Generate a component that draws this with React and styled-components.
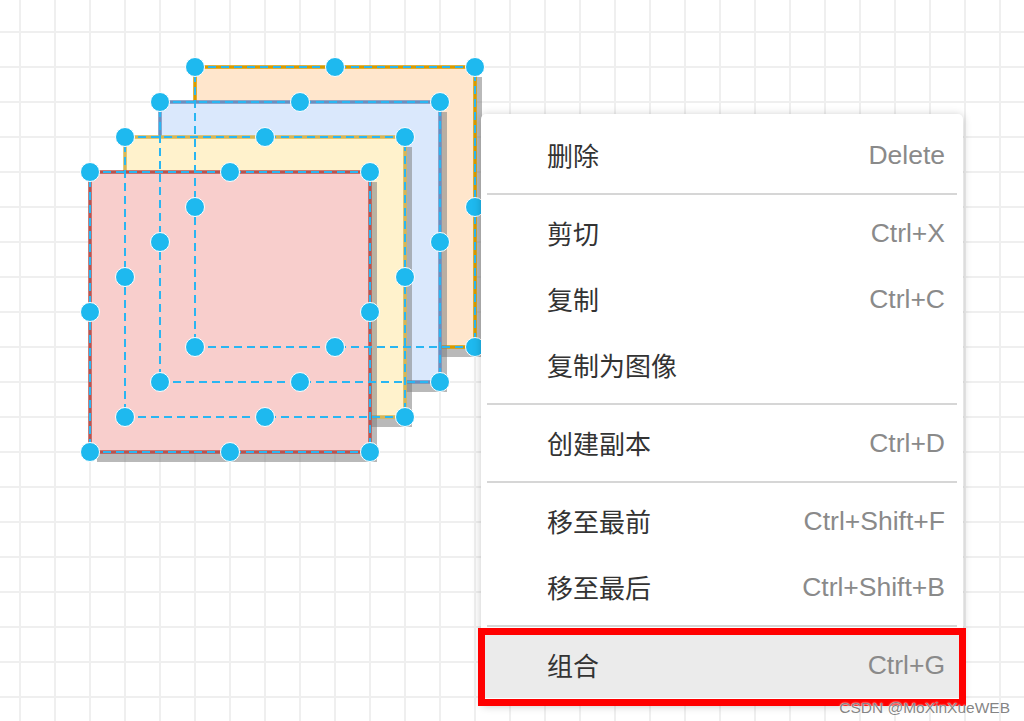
import React from 'react';
import styled, { createGlobalStyle } from 'styled-components';

const GlobalStyle = createGlobalStyle`
  html, body {
    margin: 0;
    padding: 0;
    background: #ffffff;
  }
  body {
    font-family: "Liberation Sans", "Noto Sans CJK SC", sans-serif;
  }
`;

// shapes, back to front
const SIZE = 280;
const shapes = [
  { x: 195, y: 67, fill: '#ffe6cc', stroke: '#d79b00' },
  { x: 160, y: 102, fill: '#dae8fc', stroke: '#6c8ebf' },
  { x: 125, y: 137, fill: '#fff2cc', stroke: '#d6b656' },
  { x: 90, y: 172, fill: '#f8cecc', stroke: '#b85450' },
];

const handlePoints = (s) => {
  const h = SIZE / 2;
  return [
    [s.x, s.y],
    [s.x + h, s.y],
    [s.x + SIZE, s.y],
    [s.x, s.y + h],
    [s.x + SIZE, s.y + h],
    [s.x, s.y + SIZE],
    [s.x + h, s.y + SIZE],
    [s.x + SIZE, s.y + SIZE],
  ];
};

const menu = [
  [{ label: '删除', keys: 'Delete' }],
  [
    { label: '剪切', keys: 'Ctrl+X' },
    { label: '复制', keys: 'Ctrl+C' },
    { label: '复制为图像', keys: '' },
  ],
  [{ label: '创建副本', keys: 'Ctrl+D' }],
  [
    { label: '移至最前', keys: 'Ctrl+Shift+F' },
    { label: '移至最后', keys: 'Ctrl+Shift+B' },
  ],
  [{ label: '组合', keys: 'Ctrl+G', marked: true }],
];

const App = () => {
  return (
    <>
      <GlobalStyle />
      <Canvas>
        <Drawing width="1024" height="721" viewBox="0 0 1024 721">
          {shapes.map((s, i) => (
            <g key={'shape' + i}>
              <rect
                x={s.x + 7}
                y={s.y + 10}
                width={SIZE}
                height={SIZE}
                fill="#808080"
                opacity="0.55"
              />
              <rect
                x={s.x}
                y={s.y}
                width={SIZE}
                height={SIZE}
                fill={s.fill}
                stroke={s.stroke}
                strokeWidth="3.5"
              />
            </g>
          ))}
          {shapes.map((s, i) => (
            <rect
              key={'sel' + i}
              x={s.x}
              y={s.y}
              width={SIZE}
              height={SIZE}
              fill="none"
              stroke="#29b6f2"
              strokeWidth="2"
              strokeDasharray="8 5"
            />
          ))}
          {shapes.map((s, i) =>
            handlePoints(s).map(([cx, cy], j) => (
              <circle
                key={'h' + i + '-' + j}
                cx={cx}
                cy={cy}
                r="9.5"
                fill="#1eb9ef"
                stroke="#ffffff"
                strokeWidth="1"
              />
            ))
          )}
        </Drawing>

        <Menu>
          {menu.map((group, gi) => (
            <React.Fragment key={gi}>
              {gi > 0 && <Divider />}
              {group.map((item) => (
                <MenuItem key={item.label} $marked={item.marked}>
                  <Label>{item.label}</Label>
                  <Keys>{item.keys}</Keys>
                </MenuItem>
              ))}
            </React.Fragment>
          ))}
        </Menu>

        <Watermark>CSDN @MoXinXueWEB</Watermark>
      </Canvas>
    </>
  );
};

export default App;

const Canvas = styled.div`
  position: relative;
  width: 1024px;
  height: 721px;
  overflow: hidden;
  background-color: #ffffff;
  background-image: linear-gradient(to right, #efefef 2px, transparent 2px),
    linear-gradient(to bottom, #efefef 2px, transparent 2px);
  background-size: 35px 35px;
  background-position: 19px -4px;
`;

const Drawing = styled.svg`
  display: block;
`;

const Menu = styled.div`
  position: absolute;
  left: 481px;
  top: 114px;
  width: 482px;
  padding: 8px 0 7px;
  background: #ffffff;
  border-radius: 5px;
  box-shadow: 0 1px 8px rgba(0, 0, 0, 0.22);
`;

const MenuItem = styled.div`
  position: relative;
  display: flex;
  align-items: center;
  justify-content: space-between;
  height: 66px;
  padding: 0 18px 0 66px;
  background: ${(p) => (p.$marked ? '#ebebeb' : 'transparent')};

  ${(p) =>
    p.$marked &&
    `
    &::after {
      content: '';
      position: absolute;
      top: -4px;
      bottom: -8px;
      left: -3px;
      right: -3px;
      border: 7px solid #ff0000;
    }
  `}
`;

const Label = styled.span`
  font-family: "Noto Sans CJK SC", "Noto Sans", sans-serif;
  font-size: 26px;
  color: #333333;
  line-height: 1;
`;

const Keys = styled.span`
  font-family: "Liberation Sans", Arial, sans-serif;
  font-size: 26.5px;
  color: #8a8a8a;
  line-height: 1;
`;

const Divider = styled.div`
  height: 2px;
  margin: 5px 6px;
  background: #d6d6d6;
`;

const Watermark = styled.div`
  position: absolute;
  right: 14px;
  bottom: 6px;
  z-index: 2;
  font-family: "Liberation Sans", Arial, sans-serif;
  font-size: 15.5px;
  line-height: 1;
  color: rgba(110, 110, 110, 0.85);
  text-shadow: 0 0 2px #ffffff, 0 0 1px #ffffff;
`;
